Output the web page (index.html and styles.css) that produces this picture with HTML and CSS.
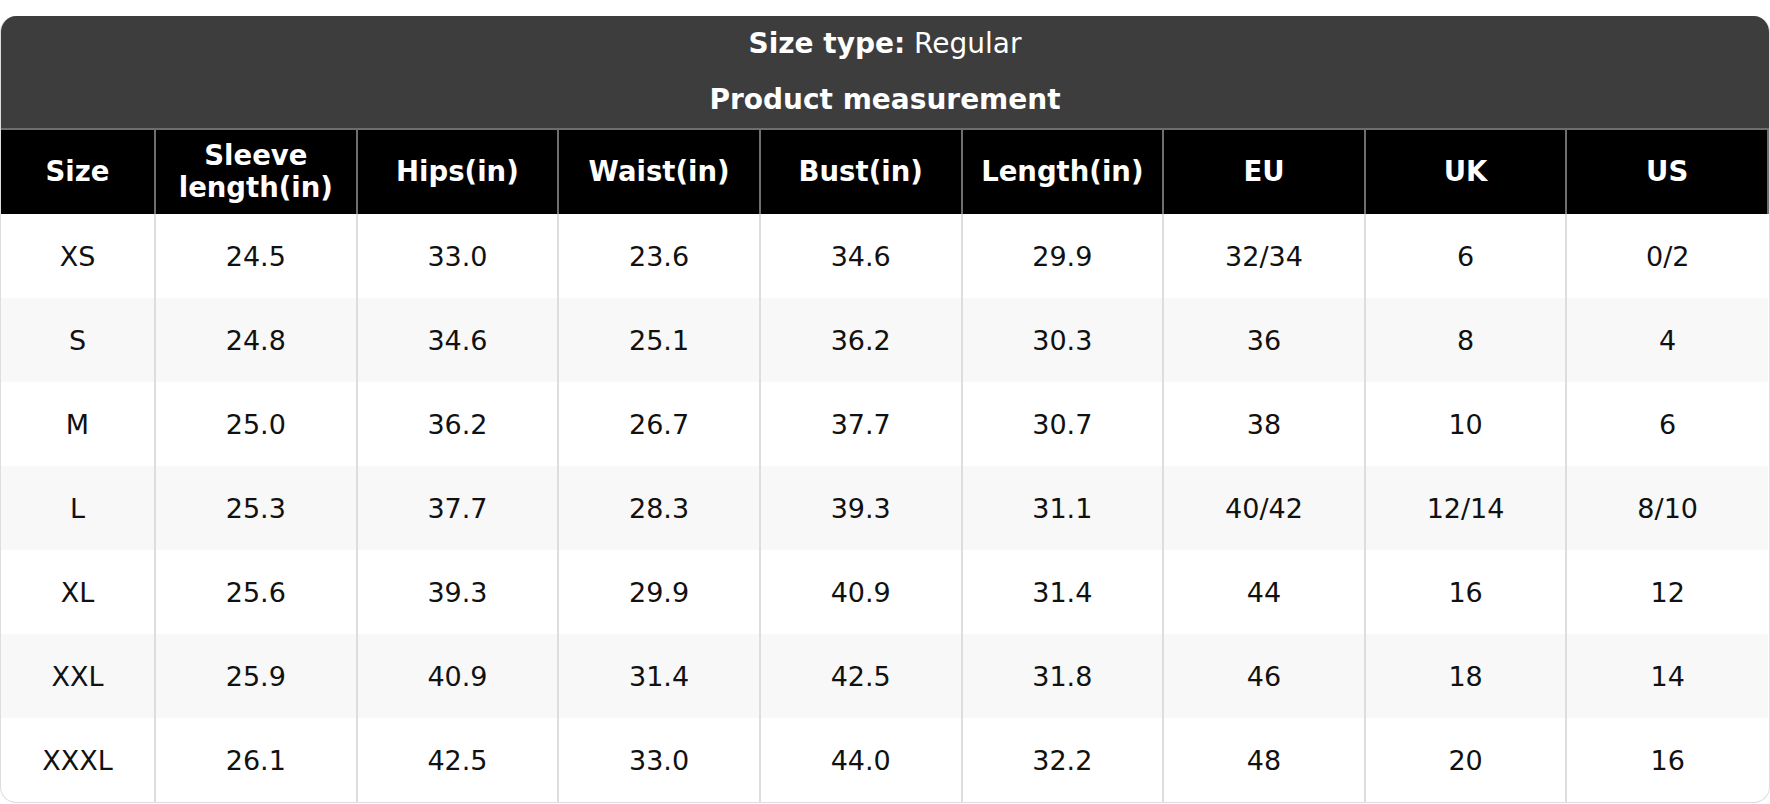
FILE: index.html
```html
<!DOCTYPE html>
<html>
<head>
<meta charset="utf-8">
<link rel="stylesheet" href="styles.css">
</head>
<body>
<div class="card">
  <div class="titles">
    <div class="title-line"><b>Size type:</b> Regular</div>
    <div class="title-line title-bold">Product measurement</div>
  </div>
  <table class="chart">
    <colgroup>
      <col class="c-first">
      <col><col><col><col><col><col><col><col>
    </colgroup>
    <thead>
      <tr>
        <th>Size</th>
        <th>Sleeve<br>length(in)</th>
        <th>Hips(in)</th>
        <th>Waist(in)</th>
        <th>Bust(in)</th>
        <th>Length(in)</th>
        <th>EU</th>
        <th>UK</th>
        <th>US</th>
      </tr>
    </thead>
    <tbody>
      <tr><td>XS</td><td>24.5</td><td>33.0</td><td>23.6</td><td>34.6</td><td>29.9</td><td>32/34</td><td>6</td><td>0/2</td></tr>
      <tr><td>S</td><td>24.8</td><td>34.6</td><td>25.1</td><td>36.2</td><td>30.3</td><td>36</td><td>8</td><td>4</td></tr>
      <tr><td>M</td><td>25.0</td><td>36.2</td><td>26.7</td><td>37.7</td><td>30.7</td><td>38</td><td>10</td><td>6</td></tr>
      <tr><td>L</td><td>25.3</td><td>37.7</td><td>28.3</td><td>39.3</td><td>31.1</td><td>40/42</td><td>12/14</td><td>8/10</td></tr>
      <tr><td>XL</td><td>25.6</td><td>39.3</td><td>29.9</td><td>40.9</td><td>31.4</td><td>44</td><td>16</td><td>12</td></tr>
      <tr><td>XXL</td><td>25.9</td><td>40.9</td><td>31.4</td><td>42.5</td><td>31.8</td><td>46</td><td>18</td><td>14</td></tr>
      <tr><td>XXXL</td><td>26.1</td><td>42.5</td><td>33.0</td><td>44.0</td><td>32.2</td><td>48</td><td>20</td><td>16</td></tr>
    </tbody>
  </table>
</div>
</body>
</html>
```

FILE: styles.css
```css
html, body {
  margin: 0;
  padding: 0;
  background: #ffffff;
}
body {
  padding-top: 16px;
  font-family: "DejaVu Sans", Verdana, sans-serif;
}
.card {
  width: 1770px;
  box-sizing: border-box;
  border: 1px solid #dddddd;
  border-top: none;
  border-radius: 16px;
  overflow: hidden;
  background: #ffffff;
}
.titles {
  background: #3d3d3d;
  color: #ffffff;
  text-align: center;
  padding: 11px 0 11px;
  display: flex;
  flex-direction: column;
  gap: 22px;
}
.title-line {
  font-size: 28px;
  line-height: 34px;
}
.title-bold {
  font-weight: bold;
}
.chart {
  width: 100%;
  border-collapse: collapse;
  table-layout: fixed;
}
.c-first {
  width: 154px;
}
.chart th {
  background: #000000;
  color: #ffffff;
  font-weight: bold;
  font-size: 27.5px;
  line-height: 32px;
  height: 81px;
  padding: 0 0 3px;
  border-top: 2px solid #6e6e6e;
  border-left: 2px solid #6e6e6e;
  text-align: center;
}
.chart th:last-child {
  border-right: 2px solid #6e6e6e;
}
.chart td {
  color: #111111;
  font-size: 27px;
  height: 84px;
  padding: 0;
  text-align: center;
  border-left: 2px solid #dddddd;
}
.chart th:first-child,
.chart td:first-child {
  border-left: none;
}
.chart tbody tr:nth-child(even) td {
  background: #f8f8f8;
}
```
